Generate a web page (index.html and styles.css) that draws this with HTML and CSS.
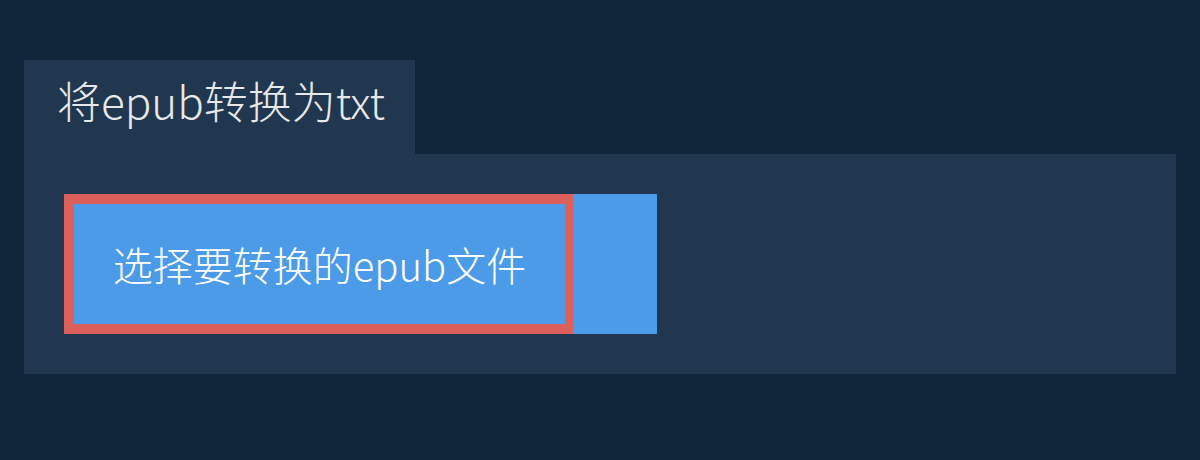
FILE: index.html
```html
<!DOCTYPE html>
<html lang="zh-CN">
<head>
<meta charset="utf-8">
<title>将epub转换为txt</title>
<link rel="stylesheet" href="styles.css">
</head>
<body>
<div class="page">
  <div class="tab"><h1 class="title">将epub转换为txt</h1></div>
  <div class="panel">
    <div class="picker">
      <label class="picker-label">选择要转换的epub文件</label>
    </div>
  </div>
</div>
</body>
</html>
```
FILE: styles.css
```css
html, body {
  margin: 0;
  padding: 0;
  background: #10243a;
}
body {
  font-family: "Noto Sans CJK SC", "Noto Sans", sans-serif;
}
.page {
  padding: 60px 24px;
}
.tab {
  width: 391px;
  height: 94px;
  box-sizing: border-box;
  background: #21364f;
  padding: 10px 0 0 33px;
}
.title {
  margin: 0;
  font-size: 44px;
  line-height: 60px;
  font-weight: 300;
  color: #e6e8ea;
}
.panel {
  background: #21364f;
  height: 220px;
  box-sizing: border-box;
  padding: 40px;
}
.picker {
  display: flex;
  width: 593px;
  height: 140px;
  background: #4c9be8;
}
.picker-label {
  width: 509px;
  box-sizing: border-box;
  border: 10px solid #dc5f5c;
  border-right-width: 8px;
  display: flex;
  align-items: center;
  justify-content: center;
  font-size: 40px;
  font-weight: 300;
  color: #ffffff;
}
```
